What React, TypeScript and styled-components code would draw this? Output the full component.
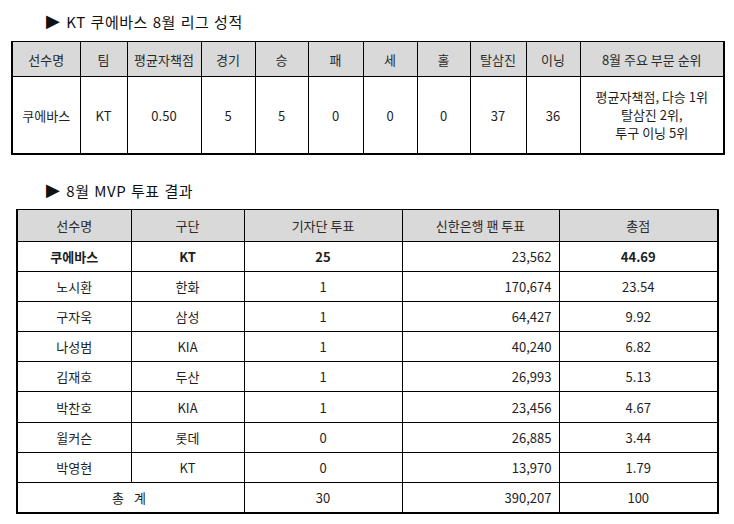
import styled, { createGlobalStyle } from 'styled-components'

const GlobalStyle = createGlobalStyle`
  html, body {
    margin: 0;
    padding: 0;
    background: #ffffff;
  }
  body {
    font-family: "Noto Sans CJK KR", "Noto Sans", "Liberation Sans", sans-serif;
    color: #1e1e1e;
  }
`

const leagueCols = [68, 47, 74, 54, 53, 55, 54, 53, 56, 54, 144]
const leagueHead = ['선수명', '팀', '평균자책점', '경기', '승', '패', '세', '홀', '탈삼진', '이닝', '8월 주요 부문 순위']
const leagueRow = ['쿠에바스', 'KT', '0.50', '5', '5', '0', '0', '0', '37', '36']
const leagueRank = ['평균자책점, 다승 1위', '탈삼진 2위,', '투구 이닝 5위']

const mvpCols = [114, 113, 158, 157, 159]
const mvpHead = ['선수명', '구단', '기자단 투표', '신한은행 팬 투표', '총점']
const mvpRows = [
  { name: '쿠에바스', team: 'KT', press: '25', fan: '23,562', total: '44.69', bold: true },
  { name: '노시환', team: '한화', press: '1', fan: '170,674', total: '23.54' },
  { name: '구자욱', team: '삼성', press: '1', fan: '64,427', total: '9.92' },
  { name: '나성범', team: 'KIA', press: '1', fan: '40,240', total: '6.82' },
  { name: '김재호', team: '두산', press: '1', fan: '26,993', total: '5.13' },
  { name: '박찬호', team: 'KIA', press: '1', fan: '23,456', total: '4.67' },
  { name: '윌커슨', team: '롯데', press: '0', fan: '26,885', total: '3.44' },
  { name: '박영현', team: 'KT', press: '0', fan: '13,970', total: '1.79' },
]

const ROW = 29.1

export default function App() {
  return (
    <>
      <GlobalStyle />
      <Page>
        <Title $top={12} $bottom={11}>
          <Arrow>▶&#xFE0E;</Arrow>KT 쿠에바스 8월 리그 성적
        </Title>
        <Grid $left={11} $width={712}>
          <colgroup>
            {leagueCols.map((w, i) => (
              <col key={i} style={{ width: w }} />
            ))}
          </colgroup>
          <thead>
            <tr>
              {leagueHead.map((h) => (
                <HeadCell key={h} $height={34}>
                  {h}
                </HeadCell>
              ))}
            </tr>
          </thead>
          <tbody>
            <tr>
              {leagueRow.map((v, i) => (
                <Cell key={i} $height={76}>
                  {v}
                </Cell>
              ))}
              <Cell $height={76}>
                <RankText>
                  {leagueRank.map((l) => (
                    <div key={l}>{l}</div>
                  ))}
                </RankText>
              </Cell>
            </tr>
          </tbody>
        </Grid>

        <Title $top={26} $bottom={10}>
          <Arrow>▶&#xFE0E;</Arrow>8월 MVP 투표 결과
        </Title>
        <Grid $left={16} $width={701}>
          <colgroup>
            {mvpCols.map((w, i) => (
              <col key={i} style={{ width: w }} />
            ))}
          </colgroup>
          <thead>
            <tr>
              {mvpHead.map((h) => (
                <HeadCell key={h} $height={31}>
                  {h}
                </HeadCell>
              ))}
            </tr>
          </thead>
          <tbody>
            {mvpRows.map((r) => (
              <tr key={r.name}>
                <Cell $height={ROW} $bold={r.bold}>{r.name}</Cell>
                <Cell $height={ROW} $bold={r.bold}>{r.team}</Cell>
                <Cell $height={ROW} $bold={r.bold}>{r.press}</Cell>
                <Cell $height={ROW} $align="right">{r.fan}</Cell>
                <Cell $height={ROW} $bold={r.bold}>{r.total}</Cell>
              </tr>
            ))}
            <tr>
              <Cell $height={ROW} colSpan={2}>
                <Spaced>총 계</Spaced>
              </Cell>
              <Cell $height={ROW}>30</Cell>
              <Cell $height={ROW} $align="right">390,207</Cell>
              <Cell $height={ROW}>100</Cell>
            </tr>
          </tbody>
        </Grid>
      </Page>
    </>
  )
}

const Page = styled.div`
  width: 734px;
  height: 524px;
  display: flex;
  flex-direction: column;
  overflow: hidden;
`

const Title = styled.div<{ $top: number; $bottom: number }>`
  display: flex;
  align-items: center;
  margin: ${(p) => p.$top}px 0 ${(p) => p.$bottom}px 46px;
  height: 18px;
  font-size: 15px;
  letter-spacing: 0.5px;
  word-spacing: 1px;
  color: #111;
  white-space: nowrap;
`

const Arrow = styled.span`
  font-family: "DejaVu Sans", sans-serif;
  font-size: 18px;
  line-height: 18px;
  margin-right: 6px;
`

const Grid = styled.table<{ $left: number; $width: number }>`
  margin-left: ${(p) => p.$left}px;
  width: ${(p) => p.$width}px;
  table-layout: fixed;
  border-collapse: collapse;
  border: 2px solid #000;
  border-top-width: 1px;
  font-size: 13px;
`

const HeadCell = styled.th<{ $height: number }>`
  height: ${(p) => p.$height}px;
  padding: 0;
  background: #d9d9d9;
  border: 1px solid #000;
  font-weight: 400;
  color: #2a2a2a;
  text-align: center;
  white-space: nowrap;
`

const Cell = styled.td<{ $height: number; $align?: 'center' | 'right'; $bold?: boolean }>`
  height: ${(p) => p.$height}px;
  padding: 0 ${(p) => (p.$align === 'right' ? '7px' : '0')} 0 0;
  border: 1px solid #000;
  text-align: ${(p) => p.$align ?? 'center'};
  font-weight: ${(p) => (p.$bold ? 700 : 400)};
  color: #1e1e1e;
  white-space: nowrap;
`

const RankText = styled.div`
  display: flex;
  flex-direction: column;
  align-items: center;
  line-height: 18px;
`

const Spaced = styled.span`
  letter-spacing: 3.5px;
`
